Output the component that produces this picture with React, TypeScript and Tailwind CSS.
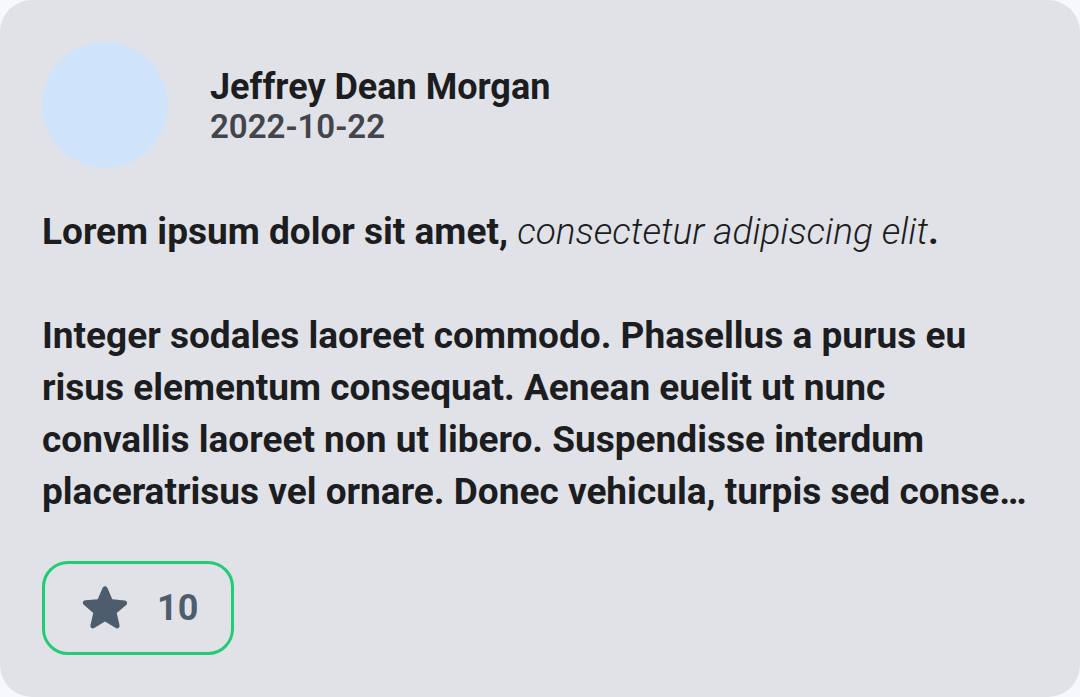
export default function App() {
  return (
    <div className="w-[1080px] h-[697px] bg-[#f7f8fc] font-['Roboto',sans-serif]">
      <div className="h-full rounded-[32px] bg-[#e1e2e7] px-[42px] pt-[42px]">
        <div className="flex items-center gap-[42px]">
          <div className="w-[126px] h-[126px] rounded-full bg-[#cfe3fb]" />
          <div className="mt-[4px] flex flex-col">
            <span className="text-[36px] leading-[38px] font-bold text-[#1c1d21]">
              Jeffrey Dean Morgan
            </span>
            <span className="mt-[2px] text-[33px] leading-[38px] font-semibold text-[#42454c]">
              2022-10-22
            </span>
          </div>
        </div>

        <div className="mt-[38px] text-[37px] leading-[52px] font-bold text-[#1c1d21]">
          <p>
            Lorem ipsum dolor sit amet,{" "}
            <em className="font-light">consectetur adipiscing elit</em>.
          </p>
          <p className="mt-[52px]">
            Integer sodales laoreet commodo. Phasellus a purus eu risus
            elementum consequat. Aenean euelit ut nunc convallis laoreet non
            ut libero. Suspendisse interdum
            <span className="block truncate">
              placeratrisus vel ornare. Donec vehicula, turpis sed consequat
              luctus, nibh nisi tempor lorem.
            </span>
          </p>
        </div>

        <button className="mt-[43px] flex items-center gap-[21px] h-[94px] w-[192px] pl-[36px] rounded-[26px] border-[3px] border-[#22cc77] text-[#4e5d6d]">
          <svg viewBox="0 0 24 24" className="w-[62px] h-[62px] -ml-[7px]" fill="currentColor">
            <path d="M12 17.27l4.15 2.51c.76.46 1.69-.22 1.49-1.08l-1.1-4.72 3.67-3.18c.67-.58.31-1.68-.57-1.75l-4.83-.41-1.89-4.46c-.34-.81-1.5-.81-1.84 0L9.19 8.63l-4.83.41c-.88.07-1.24 1.17-.57 1.75l3.67 3.18-1.1 4.72c-.2.86.73 1.54 1.49 1.08l4.15-2.5z" />
          </svg>
          <span className="text-[36px] font-bold">10</span>
        </button>
      </div>
    </div>
  );
}
